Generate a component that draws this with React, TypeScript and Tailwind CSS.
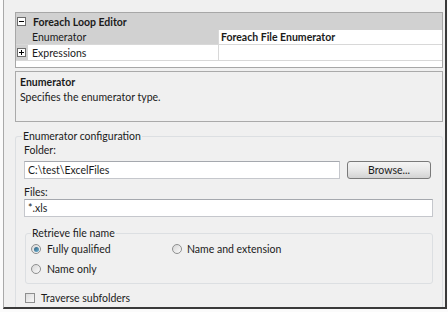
import React from 'react';

const font = { fontFamily: 'Lato, "Noto Sans", Arial, sans-serif' };

const Expander = ({ open }: { open: boolean }) => (
	<svg width="9" height="9" viewBox="0 0 9 9" className="shrink-0">
		<rect x="0.5" y="0.5" width="8" height="8" fill="#fff" stroke="#6b6b6b" />
		<path d="M2 4.5h5" stroke="#000" />
		{!open && <path d="M4.5 2v5" stroke="#000" />}
	</svg>
);

const Radio = ({ checked }: { checked?: boolean }) => (
	<span className="w-[10px] h-[10px] rounded-full border border-[#8e8f8f] bg-gradient-to-br from-[#d6d6d6] to-[#fbfbfb] flex items-center justify-center shrink-0">
		{checked && <span className="w-[5px] h-[5px] rounded-full bg-gradient-to-br from-[#2f5d7a] to-[#6fb7d8]" />}
	</span>
);

const PropertyGrid = () => (
	<div className="border border-[#a7a7a7] bg-white h-[56px] flex flex-col">
		<div className="h-[17px] bg-[#d1d1d1] flex items-center pl-[1px] gap-[7px]">
			<Expander open />
			<span className="font-bold">Foreach Loop Editor</span>
		</div>
		<div className="h-[15px] flex border-b border-[#d8d8d8]">
			<div className="w-[203px] bg-[#d1d1d1] pl-[16px] border-r border-[#d8d8d8] flex items-center">Enumerator</div>
			<div className="flex-1 pl-[2px] font-bold flex items-center">Foreach File Enumerator</div>
		</div>
		<div className="h-[16px] flex border-b border-[#d8d8d8]">
			<div className="w-[12px] bg-[#d1d1d1] flex items-center pl-[1px]">
				<Expander open={false} />
			</div>
			<div className="w-[191px] pl-[4px] border-r border-[#d8d8d8] flex items-center">Expressions</div>
			<div className="flex-1" />
		</div>
	</div>
);

const App = () => {
	return (
		<div className="w-[448px] h-[312px] bg-[#fbfbfb] text-[10.5px] text-[#1b1b1b] leading-[14px]" style={font}>
			<div className="ml-[3px] w-[444px] h-[309px] bg-[#f0f0f0] border-l border-[#a9a9a9] border-r-2 border-b-2 border-r-[#3a3a3a] border-b-[#3a3a3a] pl-[11px] pr-[2px] pt-[12px] flex flex-col">
				<PropertyGrid />

				<div className="mt-[3px] h-[51px] border border-[#aaaaaa] bg-[#f0f0f0] px-[4px] pt-[3px]">
					<div className="font-bold leading-[15px]">Enumerator</div>
					<div className="leading-[15px]">Specifies the enumerator type.</div>
				</div>

				<fieldset className="mt-[7px] border border-[#dcdfe2] border-b-0 rounded-t-[3px] pl-[8px] pr-[9px] flex-1">
					<legend className="px-[1px] -ml-[2px] leading-[14px]">Enumerator configuration</legend>

					<div>Folder:</div>
					<div className="mt-[4px] flex">
						<div className="w-[316px] h-[18px] bg-white border border-[#c5c7cc] border-t-[#a5a8ae] pl-[3px] flex items-center">C:\test\ExcelFiles</div>
						<button className="ml-[7px] w-[84px] h-[18px] rounded-[3px] border border-[#7a7a7a] bg-gradient-to-b from-[#f4f4f4] via-[#e8e8e8] to-[#d3d3d3] text-center">
							Browse...
						</button>
					</div>

					<div className="mt-[6px]">Files:</div>
					<div className="h-[18px] bg-white border border-[#c5c7cc] border-t-[#a5a8ae] pl-[3px] flex items-center">*.xls</div>

					<fieldset className="mt-[9px] ml-[1px] border border-[#dcdfe2] rounded-[3px] pl-[5px] pb-[5px]">
						<legend className="px-[1px] leading-[14px]">Retrieve file name</legend>
						<div className="h-[18px] flex items-center">
							<div className="w-[141px] flex items-center gap-[6px]">
								<Radio checked />
								<span>Fully qualified</span>
							</div>
							<div className="flex items-center gap-[5px]">
								<Radio />
								<span>Name and extension</span>
							</div>
						</div>
						<div className="mt-[2px] h-[18px] flex items-center gap-[6px]">
							<Radio />
							<span>Name only</span>
						</div>
					</fieldset>

					<div className="mt-[7px] ml-[1px] h-[14px] flex items-center gap-[6px]">
						<span className="w-[10px] h-[10px] border border-[#8e8f8f] bg-gradient-to-br from-[#dcdcdc] to-[#f8f8f8]" />
						<span>Traverse subfolders</span>
					</div>
				</fieldset>
			</div>
		</div>
	);
};

export default App;
